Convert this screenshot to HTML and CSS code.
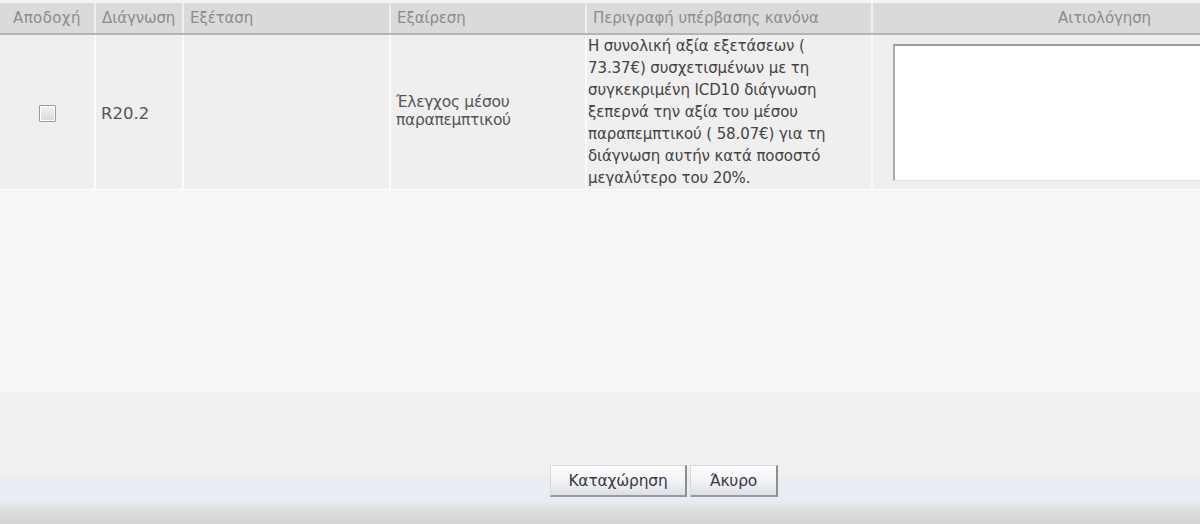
FILE: index.html
```html
<!DOCTYPE html>
<html lang="el">
<head>
<meta charset="utf-8">
<title>Εξαιρέσεις</title>
<link rel="stylesheet" href="styles.css">
</head>
<body>
<div class="page">
  <div class="grid-wrap">
    <table class="grid">
      <colgroup>
        <col class="c1"><col class="c2"><col class="c3"><col class="c4"><col class="c5"><col class="c6">
      </colgroup>
      <thead>
        <tr>
          <th>Αποδοχή</th>
          <th>Διάγνωση</th>
          <th>Εξέταση</th>
          <th>Εξαίρεση</th>
          <th>Περιγραφή υπέρβασης κανόνα</th>
          <th class="center">Αιτιολόγηση</th>
        </tr>
      </thead>
      <tbody>
        <tr>
          <td class="center"><span class="chk"></span></td>
          <td class="code">R20.2</td>
          <td></td>
          <td class="exc">Έλεγχος μέσου<br>παραπεμπτικού</td>
          <td class="desc">Η συνολική αξία εξετάσεων (<br>73.37€) συσχετισμένων με τη<br>συγκεκριμένη ICD10 διάγνωση<br>ξεπερνά την αξία του μέσου<br>παραπεμπτικού ( 58.07€) για τη<br>διάγνωση αυτήν κατά ποσοστό<br>μεγαλύτερο του 20%.</td>
          <td class="reason"><div class="ta"></div></td>
        </tr>
      </tbody>
    </table>
    <div class="empty"></div>
  </div>
  <div class="footer">
    <div class="actions">
      <button class="btn save">Καταχώρηση</button>
      <button class="btn cancel">Άκυρο</button>
    </div>
  </div>
</div>
</body>
</html>
```

FILE: styles.css
```css
html, body {
  margin: 0;
  padding: 0;
  width: 1200px;
  height: 524px;
  overflow: hidden;
  background: #f0f0f0;
  font-family: "DejaVu Sans", Tahoma, sans-serif;
}

.page {
  display: flex;
  flex-direction: column;
  height: 524px;
  overflow: hidden;
}

.grid-wrap {
  padding-top: 3px;
  background: #f4f4f4;
  width: 1330px;
}

.grid {
  border-collapse: collapse;
  table-layout: fixed;
  width: 1330px;
}

.c1 { width: 95px; }
.c2 { width: 88px; }
.c3 { width: 207px; }
.c4 { width: 196px; }
.c5 { width: 286px; }
.c6 { width: 458px; }

.grid th {
  height: 31px;
  padding: 0 0 1px 6px;
  background: #dadada;
  color: #8c8c8c;
  font-weight: normal;
  font-size: 15px;
  text-align: left;
  border-left: 2px solid #eeeeee;
  border-bottom: 2px solid #b4b4b4;
  box-sizing: border-box;
  vertical-align: middle;
  white-space: nowrap;
  letter-spacing: -0.1px;
}

.grid th:first-child { border-left: none; padding-left: 13px; letter-spacing: 0.4px; }

.grid th.center { text-align: center; }

.grid tbody tr { border-top: 2px solid #f7f7f7; }

.grid td {
  background: #efefef;
  height: 151px;
  padding: 0 0 0 5px;
  border-left: 2px solid #fafafa;
  vertical-align: middle;
  color: #4a4a4a;
  font-size: 14px;
  box-sizing: border-box;
}

.grid td:first-child { border-left: none; padding: 0; }

.center { text-align: center; }

.chk {
  display: inline-block;
  width: 15px;
  height: 15px;
  margin-top: 3px;
  border: 1px solid #9a9a9a;
  border-radius: 1px;
  background: linear-gradient(#f4f4f4, #d8d8d8);
  box-shadow: inset 0 0 0 1px #ffffff;
  vertical-align: middle;
}

.grid td.code { font-size: 16.5px; color: #555; padding-top: 2px; }

.grid td.exc {
  font-size: 15.5px;
  line-height: 18px;
  color: #555;
  letter-spacing: -0.3px;
  padding-bottom: 2px;
}

.grid td.desc {
  font-size: 15px;
  line-height: 22px;
  color: #444;
  letter-spacing: -0.1px;
  padding: 0 0 0 1px;
  white-space: nowrap;
}

.grid td.reason { padding: 0 0 0 20px; }

.ta {
  height: 137px;
  margin: 0;
  background: #ffffff;
  border-top: 2px solid #9c9ca8;
  border-left: 2px solid #a8a8b0;
  border-bottom: 1px solid #e4e4e4;
  box-sizing: border-box;
}

.empty {
  height: 202px;
  background: #f6f6f4;
  border-top: 1px solid #fbfbfb;
  border-bottom: 3px solid #f0f0ee;
  box-shadow: 0 2px 2px #ebebeb;
}

.footer {
  flex: 1;
  display: flex;
  align-items: flex-start;
  justify-content: center;
  padding-top: 70px;
  background: linear-gradient(#f0f0f0 0px, #f0f0f0 79px, #e9ecf3 85px, #e9ecf3 106px, #dcddd8 118px, #d4d4d4 128px);
}

.actions {
  display: flex;
  gap: 3px;
  margin-left: 128px;
}

.btn {
  height: 32px;
  font-family: "DejaVu Sans", Tahoma, sans-serif;
  font-size: 15.5px;
  color: #3a3a44;
  background: linear-gradient(#ffffff, #eef0f4 60%, #dcdfe6);
  border: 1px solid #d8d8d8;
  border-right: 2px solid #8e8e8e;
  border-bottom: 2px solid #9a9a9a;
  padding: 0;
  letter-spacing: -0.2px;
}

.save { width: 137px; }
.cancel { width: 88px; }
```
